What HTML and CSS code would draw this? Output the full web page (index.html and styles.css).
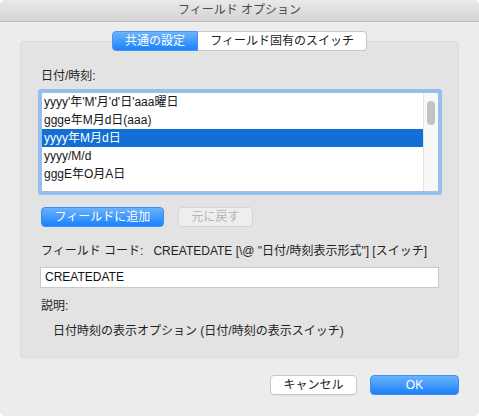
FILE: index.html
```html
<!DOCTYPE html>
<html lang="ja">
<head>
<meta charset="utf-8">
<title>フィールド オプション</title>
<link rel="stylesheet" href="styles.css">
</head>
<body>
<div class="window">
  <div class="titlebar">フィールド オプション</div>
  <div class="content">
    <div class="tabs">
      <div class="tab active">共通の設定</div>
      <div class="tab">フィールド固有のスイッチ</div>
    </div>
    <div class="group">
      <div class="label">日付/時刻:</div>
      <div class="listbox">
        <div class="rows">
          <div class="row">yyyy'年'M'月'd'日'aaa曜日</div>
          <div class="row">ggge年M月d日(aaa)</div>
          <div class="row selected">yyyy年M月d日</div>
          <div class="row">yyyy/M/d</div>
          <div class="row">gggE年O月A日</div>
        </div>
        <div class="scrollbar"><div class="thumb"></div></div>
      </div>
      <div class="actions">
        <button class="btn primary add">フィールドに追加</button>
        <button class="btn disabled revert">元に戻す</button>
      </div>
      <div class="codeline"><span>フィールド コード:</span><span class="code">CREATEDATE [\@ "日付/時刻表示形式"] [スイッチ]</span></div>
      <div class="field">CREATEDATE</div>
      <div class="label desc-label">説明:</div>
      <div class="desc">日付時刻の表示オプション (日付/時刻の表示スイッチ)</div>
    </div>
    <div class="footer">
      <button class="btn secondary cancel">キャンセル</button>
      <button class="btn primary ok">OK</button>
    </div>
  </div>
</div>
</body>
</html>
```
FILE: styles.css
```css
* { box-sizing: border-box; }
html, body { margin: 0; background: #ffffff; }
body {
  font-family: "Liberation Sans", "Noto Sans CJK JP", sans-serif;
  font-size: 12px;
  color: #1f1f1f;
}
.window {
  width: 479px;
  height: 416px;
  background: #ececec;
  border-radius: 5px;
  overflow: hidden;
  display: flex;
  flex-direction: column;
}
.titlebar {
  height: 22px;
  flex: none;
  background: linear-gradient(#e9e9e9, #d4d4d4);
  border-bottom: 1px solid #bdbdbd;
  display: flex;
  align-items: center;
  justify-content: center;
  line-height: 21px;
  color: #4a4a4a;
}
.content {
  padding: 9px 20px 0;
  display: flex;
  flex-direction: column;
}
.tabs {
  align-self: center;
  display: flex;
  height: 20px;
  position: relative;
  z-index: 1;
}
.tab {
  padding: 0 12px;
  line-height: 18px;
  height: 20px;
  border: 1px solid #c6c6c6;
  border-left: none;
  background: #fff;
  border-radius: 0 4px 4px 0;
  color: #1c1c1c;
}
.tab.active {
  background: linear-gradient(#6cb4fb, #1a82fb);
  border: 1px solid #4795f0;
  border-radius: 4px 0 0 4px;
  color: #fff;
}
.group {
  margin-top: -10px;
  background: #e3e3e3;
  border: 1px solid #dadada;
  border-radius: 4px;
  padding: 27px 20px 18px 20px;
  display: flex;
  flex-direction: column;
}
.label {
  line-height: 15px;
  height: 15px;
}
.listbox {
  margin-top: 8px;
  height: 100px;
  width: 398px;
  border: 1px solid #a9bcd3;
  background: #fff;
  box-shadow: 0 0 0 3px #92bff1;
  border-radius: 1px;
  display: flex;
  overflow: hidden;
}
.rows {
  flex: 1;
  overflow: hidden;
}
.row {
  height: 18px;
  line-height: 18px;
  padding-left: 2px;
  white-space: nowrap;
  color: #161616;
}
.row.selected {
  background: #116fd5;
  color: #fff;
}
.scrollbar {
  width: 15px;
  flex: none;
  background: #f8f8f8;
  border-left: 1px solid #e4e4e4;
  padding: 8px 0 0 3px;
}
.thumb {
  width: 8px;
  height: 24px;
  border-radius: 4px;
  background: #c2c2c2;
}
.actions {
  margin-top: 15px;
  display: flex;
  gap: 14px;
}
.btn {
  font-family: inherit;
  font-size: 12px;
  height: 20px;
  line-height: 18px;
  padding: 0;
  margin: 0;
  border-radius: 4px;
  text-align: center;
}
.btn.primary {
  background: linear-gradient(#6bb2fb, #1a80fb);
  border: 1px solid #3a8ef4;
  color: #fff;
}
.btn.secondary {
  background: #fff;
  border: 1px solid #c8c8c8;
  color: #1c1c1c;
  box-shadow: 0 1px 0 rgba(0, 0, 0, 0.04);
}
.btn.disabled {
  background: #eeeeee;
  border: 1px solid #d5d5d5;
  color: #b3b3b3;
}
.add { width: 123px; }
.revert { width: 75px; }
.cancel { width: 87px; }
.ok { width: 89px; }
.codeline {
  margin-top: 17px;
  line-height: 15px;
  height: 15px;
  white-space: nowrap;
}
.code { margin-left: 10px; }
.field {
  margin-top: 8px;
  height: 21px;
  width: 399px;
  margin-left: -1px;
  background: #fff;
  border: 1px solid #c9c9c9;
  padding-left: 4px;
  line-height: 19px;
  color: #111;
}
.desc-label { margin-top: 11px; }
.desc {
  margin-top: 10px;
  padding-left: 12px;
  line-height: 15px;
  height: 15px;
}
.footer {
  margin-top: 17px;
  display: flex;
  justify-content: flex-end;
  gap: 13px;
}
```
